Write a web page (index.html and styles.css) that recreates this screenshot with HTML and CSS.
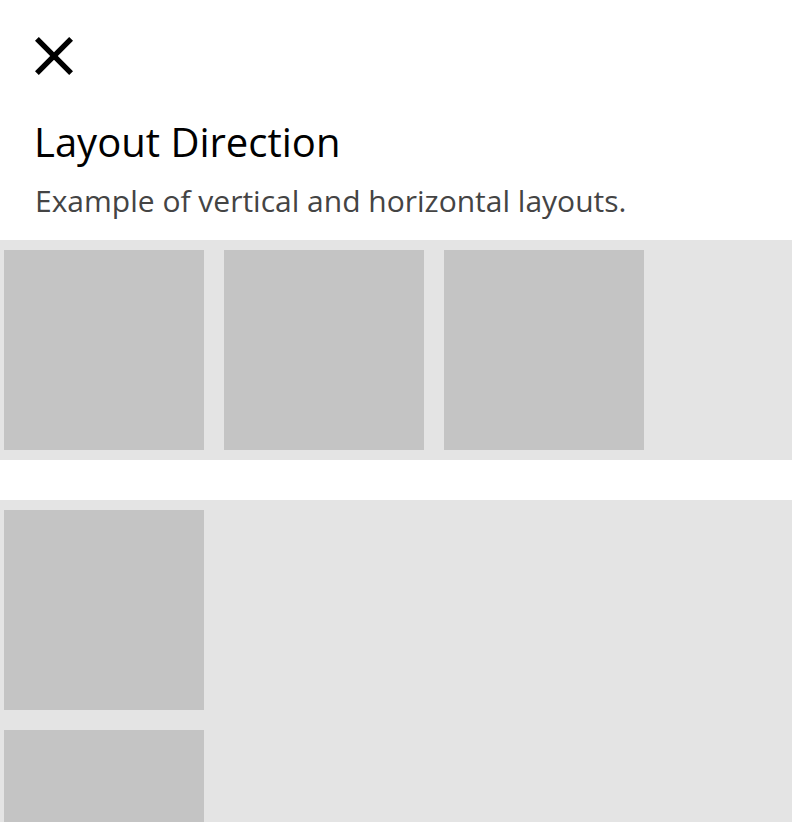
FILE: index.html
```html
<!DOCTYPE html>
<html>
<head>
<meta charset="utf-8">
<link rel="stylesheet" href="styles.css">
</head>
<body>
<header class="header">
  <button class="close" aria-label="Close">
    <svg width="38" height="38" viewBox="5 5 14 14"><path d="M19 6.41L17.59 5 12 10.59 6.41 5 5 6.41 10.59 12 5 17.59 6.41 19 12 13.41 17.59 19 19 17.59 13.41 12z" fill="#000"/></svg>
  </button>
  <h1 class="title">Layout Direction</h1>
  <p class="subtitle">Example of vertical and horizontal layouts.</p>
</header>
<section class="panel panel-row">
  <div class="box"></div>
  <div class="box"></div>
  <div class="box"></div>
</section>
<section class="panel panel-col">
  <div class="box"></div>
  <div class="box"></div>
  <div class="box"></div>
</section>
</body>
</html>
```
FILE: styles.css
```css
html, body {
  margin: 0;
  padding: 0;
  background: #fff;
  font-family: "Open Sans", sans-serif;
}
.header {
  padding: 37px 0 0 35px;
  height: 240px;
  box-sizing: border-box;
}
.close {
  display: block;
  border: 0;
  padding: 0;
  margin: 0;
  background: none;
  width: 38px;
  height: 38px;
}
.close svg { display: block; }
.title {
  margin: 40px 0 0 -1px;
  font-size: 40px;
  font-weight: 400;
  line-height: 54px;
  color: #000;
}
.subtitle {
  margin: 12px 0 0 0;
  font-size: 30px;
  line-height: 40px;
  color: #444;
}
.panel {
  background: #e4e4e4;
  display: flex;
  gap: 20px;
  padding: 10px 4px;
}
.panel-row {
  flex-direction: row;
  height: 220px;
  box-sizing: border-box;
}
.panel-col {
  flex-direction: column;
  margin-top: 40px;
}
.box {
  width: 200px;
  height: 200px;
  background: #c4c4c4;
  flex: none;
}
```
